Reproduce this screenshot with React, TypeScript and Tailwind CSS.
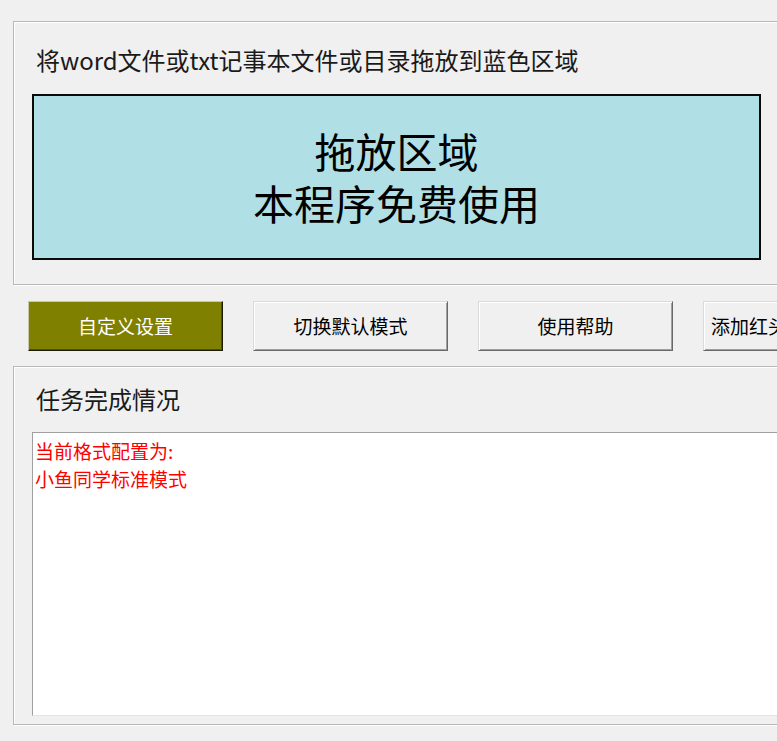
const FONT = "font-['Microsoft_YaHei','Noto_Sans_CJK_SC',sans-serif]";

const GrayButton = ({ label, left }: { label: string; left?: boolean }) => (
  <button
    className={`w-[195px] h-[50px] shrink-0 flex items-center ${left ? 'justify-start pl-[7px]' : 'justify-center'} overflow-hidden whitespace-nowrap bg-[#f0f0f0] text-[19px] text-black border border-t-[#dadada] border-l-[#dadada] border-b-[#696969] border-r-[#696969] shadow-[inset_1px_1px_0_#ffffff,inset_-1px_-1px_0_#a0a0a0]`}
  >
    {label}
  </button>
);

export default function App() {
  return (
    <div className={`w-[777px] h-[741px] overflow-hidden bg-[#f0f0f0] pl-[13px] pt-[21px] ${FONT}`}>
      {/* drop panel */}
      <div className="w-[800px] h-[264px] border border-r-0 border-[#b8b8b8] shadow-[1px_1px_0_#ffffff,inset_1px_1px_0_#ffffff] flex flex-col pl-[18px]">
        <div className="h-[32px] mt-[22px] pl-[4px] text-[24px] leading-[32px] text-[#1a1a1a] whitespace-nowrap">
          将word文件或txt记事本文件或目录拖放到蓝色区域
        </div>
        <div className="mt-[18px] w-[729px] h-[166px] border-[2px] border-[#0a0a0a] bg-[#b0dfe5] flex flex-col items-center justify-center pb-[3px] text-[41px] leading-[52px] text-black">
          <span>拖放区域</span>
          <span>本程序免费使用</span>
        </div>
      </div>

      {/* buttons */}
      <div className="mt-[16px] ml-[15px] flex gap-[30px]">
        <button className="w-[195px] h-[50px] shrink-0 flex items-center justify-center bg-[#808000] text-white text-[19px] border border-t-[#c8c8a8] border-l-[#c8c8a8] border-b-[#1a1a00] border-r-[#1a1a00] shadow-[inset_-1px_-1px_0_#505000]">
          自定义设置
        </button>
        <GrayButton label="切换默认模式" />
        <GrayButton label="使用帮助" />
        <GrayButton label="添加红头文件" left />
      </div>

      {/* task panel */}
      <div className="mt-[15px] w-[800px] h-[359px] border border-r-0 border-[#b8b8b8] shadow-[1px_1px_0_#ffffff,inset_1px_1px_0_#ffffff] flex flex-col pl-[18px]">
        <div className="h-[32px] mt-[16px] pl-[4px] text-[24px] leading-[32px] text-[#1a1a1a]">任务完成情况</div>
        <div className="mt-[17px] flex-1 mb-[8px] bg-white border-t border-l border-[#a0a0a0] border-b border-b-[#e3e3e3] pt-[4px] pl-[2px] text-[19px] leading-[28px] text-[#ff0000]">
          <div>当前格式配置为:</div>
          <div>小鱼同学标准模式</div>
        </div>
      </div>
    </div>
  );
}
